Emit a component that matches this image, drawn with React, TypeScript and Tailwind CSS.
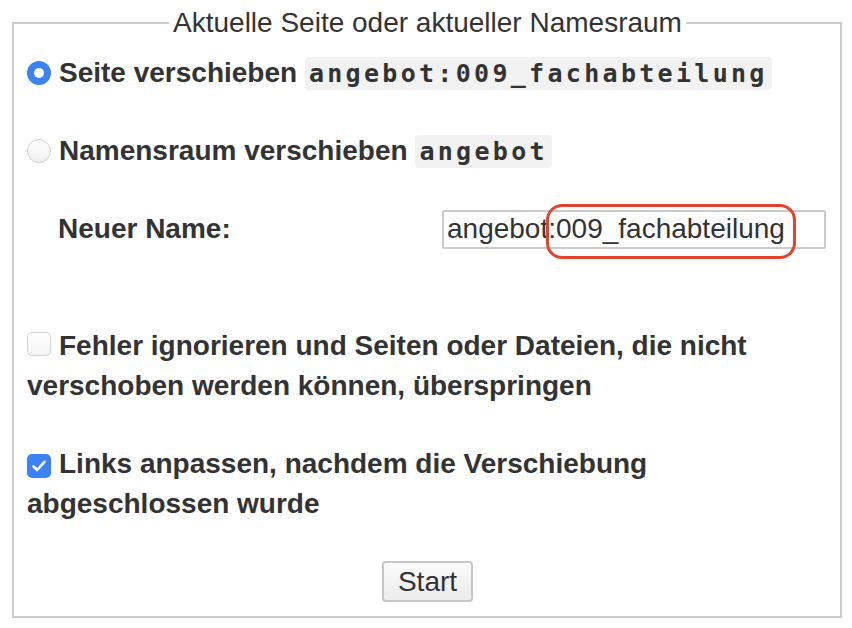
function Radio({ checked }: { checked?: boolean }) {
  if (checked) {
    return (
      <span className="inline-flex h-[24px] w-[24px] shrink-0 items-center justify-center rounded-full bg-[#3b82f6]">
        <span className="h-[10px] w-[10px] rounded-full bg-white" />
      </span>
    )
  }
  return (
    <span className="inline-block h-[24px] w-[24px] shrink-0 rounded-full border border-[#cfcfcf] bg-gradient-to-b from-white to-[#f1f1f1]" />
  )
}

function Checkbox({ checked }: { checked?: boolean }) {
  if (checked) {
    return (
      <span className="relative top-[1px] mr-[8px] inline-flex h-[24px] w-[24px] items-center justify-center rounded-[5px] bg-[#3b82f6] align-baseline">
        <svg width="16" height="16" viewBox="0 0 16 16">
          <path d="M2.5 8.5 L6.2 12 L13.5 3.8" fill="none" stroke="white" strokeWidth="2.6" strokeLinecap="round" strokeLinejoin="round" />
        </svg>
      </span>
    )
  }
  return (
    <span className="relative top-[1px] mr-[8px] inline-block h-[24px] w-[24px] rounded-[5px] border border-[#d4d4d4] bg-gradient-to-b from-white to-[#f4f4f4] align-baseline" />
  )
}

function Code({ children }: { children: string }) {
  return (
    <code className="rounded-[4px] bg-[#f2f2f2] px-[4px] py-[2px] font-['DejaVu_Sans_Mono',monospace] text-[25px] font-bold tracking-[3.3px] text-[#333]">
      {children}
    </code>
  )
}

export default function App() {
  return (
    <div className="h-[628px] w-[852px] bg-white pl-[12px] pt-[7px] font-['Liberation_Sans',Arial,sans-serif] text-[28px] text-[#333]">
      <fieldset className="h-[611px] w-[830px] border-2 border-[#cccccc] pl-[13px] pr-[12px]">
        <legend className="mx-auto px-[4px] leading-[32px]">Aktuelle Seite oder aktueller Namesraum</legend>

        <div className="mt-[14px] flex h-[40px] items-center gap-[8px] font-bold">
          <Radio checked />
          <span>
            Seite verschieben <Code>angebot:009_fachabteilung</Code>
          </span>
        </div>

        <div className="mt-[38px] flex h-[40px] items-center gap-[8px] font-bold">
          <Radio />
          <span>
            Namensraum verschieben <Code>angebot</Code>
          </span>
        </div>

        <div className="mt-[38px] flex h-[40px] items-center">
          <span className="ml-[31px] w-[384px] font-bold">Neuer Name:</span>
          <div className="relative">
            <div className="flex h-[39px] w-[384px] items-center rounded-[2px] border-2 border-[#cbcbcb] pl-[3px]">
              angebot:009_fachabteilung
            </div>
            <div className="pointer-events-none absolute left-[104px] top-[-6px] h-[55px] w-[250px] rounded-[16px] border-[3px] border-[#e2432c]" />
          </div>
        </div>

        <p className="mt-[77px] leading-[40px] font-bold">
          <Checkbox />
          Fehler ignorieren und Seiten oder Dateien, die nicht verschoben werden können, überspringen
        </p>

        <p className="mt-[38px] leading-[40px] font-bold">
          <Checkbox checked />
          Links anpassen, nachdem die Verschiebung abgeschlossen wurde
        </p>

        <div className="mt-[37px] flex justify-center">
          <button className="h-[41px] w-[91px] rounded-[4px] border-2 border-[#c6c6c6] bg-gradient-to-b from-[#fbfbfb] to-[#ebebeb] text-[28px] leading-none">
            Start
          </button>
        </div>
      </fieldset>
    </div>
  )
}
